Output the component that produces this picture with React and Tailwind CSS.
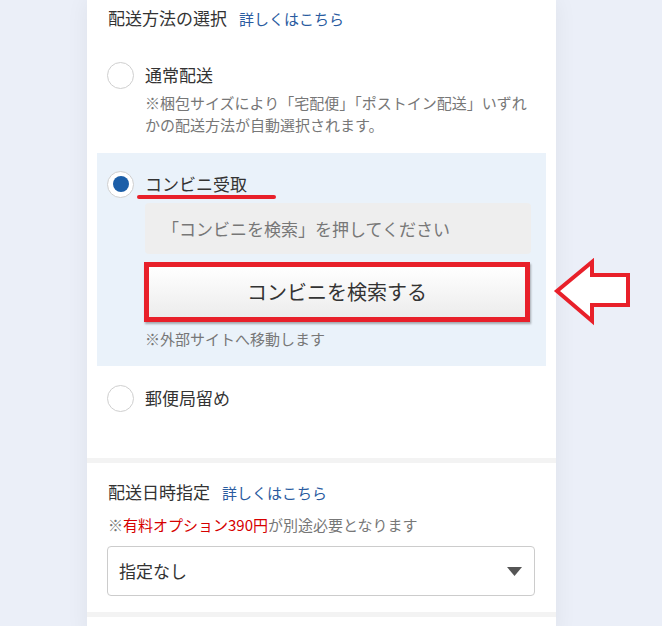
import React from "react";

function Radio({ checked }) {
  return (
    <span className="flex h-[27px] w-[27px] shrink-0 items-center justify-center rounded-full border border-[#cfcfcf] bg-white">
      {checked && <span className="h-[16px] w-[16px] rounded-full bg-[#1b5ea8]" />}
    </span>
  );
}

export default function App() {
  return (
    <div
      className="relative min-h-screen bg-[#ebeff8] text-[#333]"
      style={{ fontFamily: '"Noto Sans CJK JP", "Noto Sans", sans-serif' }}
    >
      <div className="ml-[87px] w-[469px] bg-white shadow-[0_0_22px_rgba(0,0,0,0.06)]">
        {/* Section 1 */}
        <section className="pt-[6px]">
          <div className="flex items-baseline gap-[12px] pl-[21px] leading-[24px]">
            <span className="text-[17px]">配送方法の選択</span>
            <span className="text-[15px] text-[#2a5b9f]">詳しくはこちら</span>
          </div>

          <div className="px-[10px] pt-[30px]">
            {/* Option 1 */}
            <div className="pl-[10px]">
              <div className="flex h-[28px] items-center">
                <Radio />
                <span className="ml-[11px] text-[17px] leading-[28px]">通常配送</span>
              </div>
              <p className="mt-[3px] pl-[38px] pr-[14px] text-[15px] leading-[22px] text-[#777]">
                ※梱包サイズにより「宅配便」「ポストイン配送」いずれかの配送方法が自動選択されます。
              </p>
            </div>

            {/* Option 2 highlighted */}
            <div className="mt-[17px] bg-[#eaf2fa] pb-[16px] pl-[10px] pr-[15px] pt-[17px]">
              <div className="relative flex h-[28px] items-center">
                <Radio checked />
                <span className="ml-[11px] text-[17px] leading-[28px]">コンビニ受取</span>
                <span className="absolute left-[30px] top-[25px] h-[4px] w-[139px] rounded-full bg-[#e8202a]" />
              </div>
              <div className="ml-[38px] mt-[5px] flex h-[51px] items-center rounded-[4px] bg-[#eeeeee] px-[17px] text-[17px] text-[#777]">
                「コンビニを検索」を押してください
              </div>
              <button className="ml-[37px] mt-[8px] flex h-[60px] w-[386px] items-center justify-center border-[5px] border-[#e8202a] bg-gradient-to-b from-white to-[#ececec] text-[20px] text-[#333] shadow-[1px_2px_2px_rgba(0,0,0,0.3)]">
                コンビニを検索する
              </button>
              <p className="ml-[38px] mt-[6px] text-[15px] leading-[22px] text-[#777]">
                ※外部サイトへ移動します
              </p>
            </div>

            {/* Option 3 */}
            <div className="pb-[46px] pl-[10px] pt-[18px]">
              <div className="flex h-[28px] items-center">
                <Radio />
                <span className="ml-[11px] text-[17px] leading-[28px]">郵便局留め</span>
              </div>
            </div>
          </div>
        </section>

        <div className="h-[5px] bg-[#f3f3f3]" />

        {/* Section 2 */}
        <section className="pb-[16px] pl-[20px] pr-[21px] pt-[17px]">
          <div className="flex items-baseline gap-[12px] pl-[1px] leading-[24px]">
            <span className="text-[17px]">配送日時指定</span>
            <span className="text-[15px] text-[#2a5b9f]">詳しくはこちら</span>
          </div>
          <p className="mt-[9px] pl-[1px] text-[15px] leading-[22px] text-[#777]">
            ※<span className="text-[#d60000]">有料オプション390円</span>が別途必要となります
          </p>
          <div className="mt-[10px] flex h-[50px] items-center justify-between rounded-[4px] border border-[#cccccc] bg-white pl-[11px] pr-[12px]">
            <span className="text-[17px] text-[#333]">指定なし</span>
            <svg width="15" height="9" viewBox="0 0 15 9">
              <polygon points="0,0 15,0 7.5,9" fill="#555" />
            </svg>
          </div>
        </section>

        <div className="h-[5px] bg-[#f3f3f3]" />
        <div className="h-[20px]" />
      </div>

      {/* Annotation arrow */}
      <svg
        className="absolute left-[553px] top-[258px]"
        width="80"
        height="68"
        viewBox="553 258 80 68"
      >
        <polygon
          points="557,291 592,262 592,275 628,275 628,305 592,305 592,321"
          fill="white"
          stroke="#e8202a"
          strokeWidth="4"
          strokeLinejoin="miter"
        />
      </svg>
    </div>
  );
}
